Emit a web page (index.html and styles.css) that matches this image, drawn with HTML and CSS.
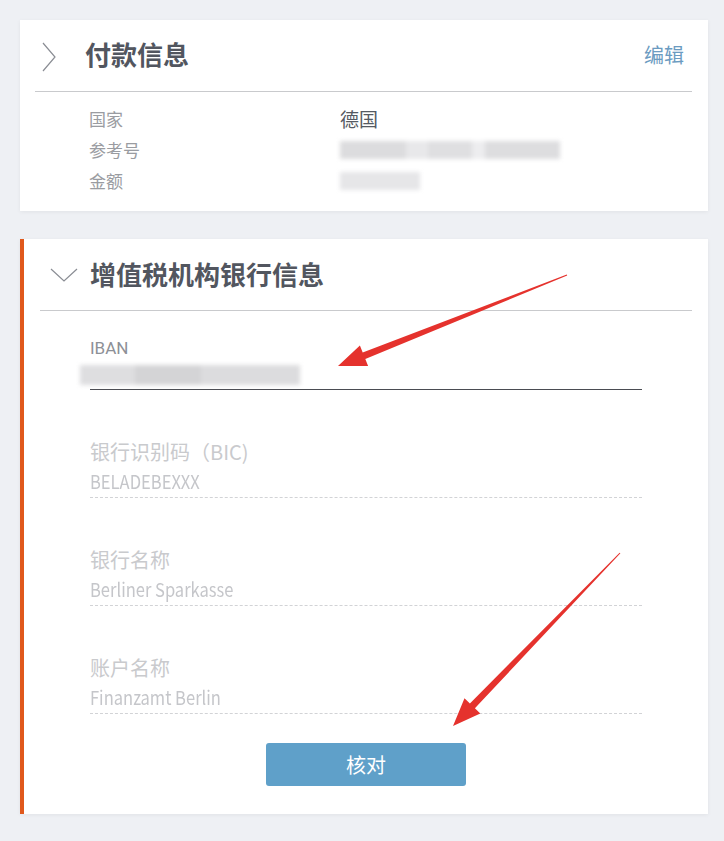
FILE: index.html
```html
<!DOCTYPE html>
<html lang="zh">
<head>
<meta charset="utf-8">
<title>付款信息</title>
<link rel="stylesheet" href="styles.css">
</head>
<body>
<div class="page">
  <section class="card">
    <div class="card-head">
      <svg class="chev-right" width="14" height="30" viewBox="0 0 14 30"><path d="M1 1 L13 15 L1 29" fill="none" stroke="#8a8d94" stroke-width="1.2"/></svg>
      <h2 class="title">付款信息</h2>
      <a class="edit">编辑</a>
    </div>
    <div class="divider"></div>
    <div class="info">
      <div class="row"><span class="k">国家</span><span class="v">德国</span></div>
      <div class="row"><span class="k">参考号</span><span class="v"><span class="blur blur-ref"></span></span></div>
      <div class="row"><span class="k">金额</span><span class="v"><span class="blur blur-amt"></span></span></div>
    </div>
  </section>

  <section class="card card-active">
    <div class="card-head head-2">
      <svg class="chev-down" width="28" height="14" viewBox="0 0 28 14"><path d="M1 1 L14 13 L27 1" fill="none" stroke="#8a8d94" stroke-width="1.2"/></svg>
      <h2 class="title">增值税机构银行信息</h2>
    </div>
    <div class="divider divider-2"></div>
    <div class="fields">
      <div class="field field-on">
        <div class="f-label">IBAN</div>
        <div class="f-value"><span class="blur blur-iban"></span></div>
      </div>
      <div class="field field-off">
        <div class="f-label">银行识别码（BIC)</div>
        <div class="f-value"><span class="txt">BELADEBEXXX</span></div>
      </div>
      <div class="field field-off">
        <div class="f-label">银行名称</div>
        <div class="f-value"><span class="txt">Berliner Sparkasse</span></div>
      </div>
      <div class="field field-off">
        <div class="f-label">账户名称</div>
        <div class="f-value"><span class="txt">Finanzamt Berlin</span></div>
      </div>
    </div>
    <div class="actions"><button class="btn">核对</button></div>
  </section>
</div>

<svg class="marks" width="724" height="841" viewBox="0 0 724 841">
  <polygon fill="#e5322d" points="338,366 368.1,365.9 365.3,359.0 567.2,275.5 566.8,274.5 362.7,352.4 359.9,345.5"/>
  <polygon fill="#e5322d" points="453,726 480.3,713.5 474.9,708.3 620.4,553.3 619.6,552.7 469.9,703.5 464.5,698.3"/>
</svg>
</body>
</html>
```
FILE: styles.css
```css
* { box-sizing: border-box; }

html, body {
  margin: 0;
  background: #eef0f4;
}

body {
  position: relative;
  width: 724px;
  height: 841px;
  overflow: hidden;
  font-family: "Noto Sans CJK SC", "Noto Sans", sans-serif;
  color: #555a62;
}

.page {
  display: flex;
  flex-direction: column;
  gap: 28px;
  padding: 20px 16px 0 20px;
}

.card {
  background: #fff;
  box-shadow: 0 1px 4px rgba(0, 0, 0, 0.06);
}

.card-head {
  height: 71px;
  display: flex;
  align-items: center;
  padding: 0 24px 0 22px;
}

.chev-right { margin-top: 2px; }

.title {
  margin: -3px 0 0 29px;
  font-size: 26px;
  font-weight: 700;
  line-height: 1;
  color: #52565f;
  flex: 1;
}

.edit {
  font-size: 20px;
  color: #6b9bc1;
  line-height: 1;
  margin-top: -2px;
}

.divider {
  height: 1px;
  background: #c9cacd;
  margin: 0 16px 0 15px;
}

.info {
  padding: 11px 0 15px 69px;
}

.row {
  display: flex;
  height: 31px;
  align-items: center;
}

.k {
  width: 251px;
  font-size: 17px;
  color: #9a9ca1;
}

.v {
  font-size: 19px;
  color: #555a62;
  display: flex;
  align-items: center;
}

.blur {
  display: inline-block;
  background: #d9d9db;
  filter: blur(2px);
}

.blur-ref {
  width: 220px;
  height: 18px;
  background: linear-gradient(90deg, #dcdcde 0 30%, #e8e8ea 30% 40%, #dfdfe1 40% 60%, #ededef 60% 66%, #dddddf 66% 100%);
}

.blur-amt {
  width: 80px;
  height: 18px;
  background: #e6e6e8;
}

.card-active {
  border-left: 4px solid #e0581c;
}

.head-2 {
  padding-left: 26px;
}

.head-2 .title {
  margin-left: 12px;
  margin-top: -2px;
}

.divider-2 {
  margin: 0 16px;
}

.fields {
  display: flex;
  flex-direction: column;
  gap: 52px;
  padding: 27px 66px 0 66px;
}

.field {
  padding-bottom: 6px;
}

.field-on {
  border-bottom: 1px solid #4a4c52;
}

.field-off {
  border-bottom: 1px dashed #d2d3d6;
}

.f-label {
  font-family: "Roboto", "Noto Sans CJK SC", sans-serif;
  font-size: 17px;
  line-height: 20px;
  color: #8d9096;
}

.field-off .f-label {
  font-family: "Noto Sans CJK SC", sans-serif;
  font-size: 20px;
  color: #c9cacd;
}

.f-value {
  margin-top: 9px;
  height: 20px;
  line-height: 20px;
  font-size: 19px;
  color: #c5c6ca;
}

.field-on .f-value {
  margin-top: 5px;
}

.txt {
  display: inline-block;
  transform: scaleX(0.87);
  transform-origin: left center;
  white-space: nowrap;
}

.blur-iban {
  width: 220px;
  height: 20px;
  margin-left: -10px;
  margin-top: 2px;
  background: linear-gradient(90deg, #dedee0 0 25%, #d4d4d6 25% 55%, #dcdcde 55% 100%);
}

.actions {
  display: flex;
  justify-content: center;
  padding: 29px 0 28px 0;
}

.btn {
  width: 200px;
  height: 43px;
  border: 0;
  border-radius: 3px;
  background: #5fa0c9;
  color: #fff;
  font-family: "Noto Sans CJK SC", sans-serif;
  font-size: 20px;
}

.marks {
  position: absolute;
  left: 0;
  top: 0;
  pointer-events: none;
}
```
